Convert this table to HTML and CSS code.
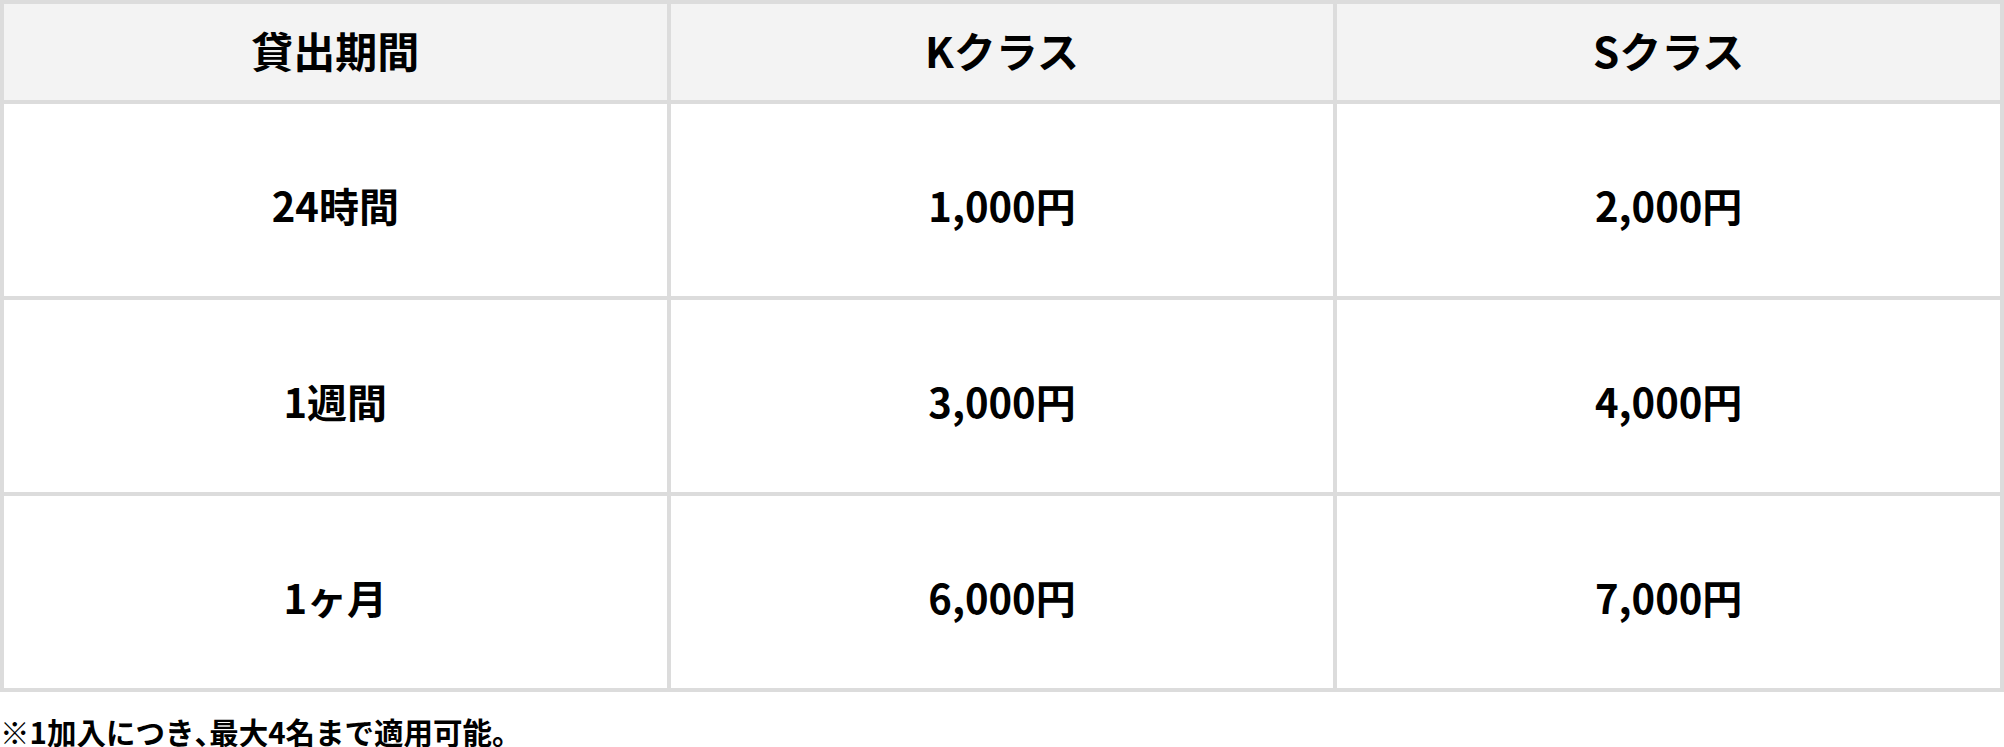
FILE: index.html
```html
<!DOCTYPE html>
<html lang="ja">
<head>
<meta charset="utf-8">
<link rel="stylesheet" href="styles.css">
</head>
<body>
<div class="price-table">
  <div class="cell head">貸出期間</div>
  <div class="cell head">Kクラス</div>
  <div class="cell head">Sクラス</div>
  <div class="cell">24時間</div>
  <div class="cell">1,000円</div>
  <div class="cell">2,000円</div>
  <div class="cell">1週間</div>
  <div class="cell">3,000円</div>
  <div class="cell">4,000円</div>
  <div class="cell">1ヶ月</div>
  <div class="cell">6,000円</div>
  <div class="cell">7,000円</div>
</div>
<p class="note">※1加入につき<span class="half">、</span>最大4名まで適用可能。</p>
</body>
</html>
```

FILE: styles.css
```css
html, body {
  margin: 0;
  padding: 0;
  background: #fff;
}
body {
  font-family: "Noto Sans CJK JP", "Noto Sans", sans-serif;
  color: #000;
  font-weight: 700;
}
.price-table {
  display: grid;
  grid-template-columns: repeat(3, 1fr);
  grid-template-rows: 96px 192px 192px 192px;
  gap: 4px;
  padding: 4px;
  background: #dcdcdc;
  width: 2004px;
  box-sizing: border-box;
}
.cell {
  background: #fff;
  display: flex;
  align-items: center;
  justify-content: center;
  font-size: 40px;
  line-height: 1;
  padding-top: 10px;
  box-sizing: border-box;
}
.cell.head {
  background: #f3f3f3;
  font-size: 42px;
  padding-top: 0;
  padding-bottom: 4px;
}
.note {
  margin: 0;
  padding-top: 23px;
  font-size: 29.5px;
  line-height: 32px;
}
.half {
  font-feature-settings: "halt";
}
```
